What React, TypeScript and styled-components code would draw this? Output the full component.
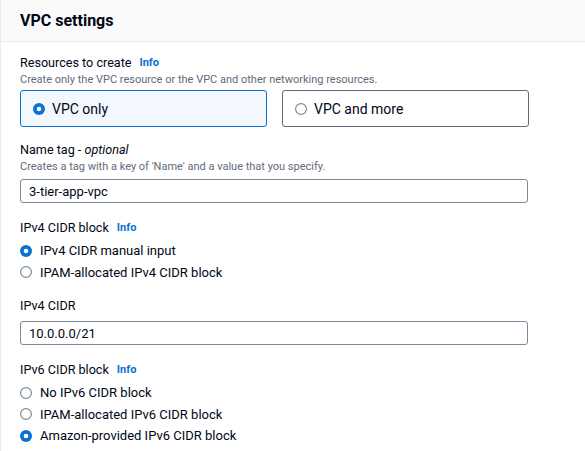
import { createGlobalStyle, styled } from "styled-components";

const GlobalStyle = createGlobalStyle`
  * {
    box-sizing: border-box;
  }

  body {
    margin: 0;
    background: #ffffff;
    font-family: Roboto, "Liberation Sans", Arial, sans-serif;
    color: #000716;
  }
`;

const Container = styled.section`
  width: 100%;
  min-height: 451px;
  border-left: 1px solid #e9ebed;
  background: #ffffff;
  overflow: hidden;
`;

const Header = styled.header`
  height: 42px;
  padding: 0 19px;
  display: flex;
  align-items: center;
  background: #fafafa;
  border-bottom: 1px solid #e9ebed;

  & h2 {
    margin: 0;
    font-size: 16px;
    font-weight: 700;
  }
`;

const Body = styled.div`
  padding: 12px 19px 0;
  display: flex;
  flex-direction: column;
`;

const Field = styled.div<{ $gap: number }>`
  display: flex;
  flex-direction: column;
  margin-bottom: ${(p) => p.$gap}px;
`;

const Label = styled.div`
  height: 18px;
  display: flex;
  align-items: center;
  gap: 8px;
  font-size: 12.6px;
  line-height: 18px;

  & em {
    font-style: italic;
  }
`;

const Info = styled.span`
  color: #0972d3;
  font-size: 11px;
  font-weight: 700;
`;

const Description = styled.div`
  height: 16px;
  font-size: 11px;
  line-height: 16px;
  color: #5f6b7a;
`;

const Tiles = styled.div`
  margin-top: 2px;
  display: flex;
  gap: 15px;
`;

const Tile = styled.div<{ $selected?: boolean }>`
  flex: 0 0 247px;
  height: 37px;
  padding: 0 12px;
  display: flex;
  align-items: center;
  gap: 7px;
  border: 1px solid ${(p) => (p.$selected ? "#0972d3" : "#5f6b7a")};
  border-radius: 3px;
  background: ${(p) => (p.$selected ? "#f2f8fd" : "#ffffff")};
  font-size: 14px;
`;

const Input = styled.div<{ $top: number }>`
  margin-top: ${(p) => p.$top}px;
  width: 508px;
  height: 24px;
  padding: 0 8px;
  display: flex;
  align-items: center;
  border: 1px solid #7d8998;
  border-radius: 3px;
  font-size: 13px;
`;

const RadioList = styled.div`
  margin-top: 3px;
  display: flex;
  flex-direction: column;
`;

const RadioRow = styled.div`
  height: 21.5px;
  display: flex;
  align-items: center;
  gap: 8px;
  font-size: 13px;
`;

function Radio({ checked }: { checked?: boolean }) {
  return (
    <svg width="12" height="12" viewBox="0 0 12 12">
      {checked ? (
        <>
          <circle cx="6" cy="6" r="6" fill="#0972d3" />
          <circle cx="6" cy="6" r="2.3" fill="#ffffff" />
        </>
      ) : (
        <circle cx="6" cy="6" r="5.4" fill="#ffffff" stroke="#7d8998" strokeWidth="1.2" />
      )}
    </svg>
  );
}

const ipv4Options = [
  { text: "IPv4 CIDR manual input", checked: true },
  { text: "IPAM-allocated IPv4 CIDR block" },
];

const ipv6Options = [
  { text: "No IPv6 CIDR block" },
  { text: "IPAM-allocated IPv6 CIDR block" },
  { text: "Amazon-provided IPv6 CIDR block", checked: true },
];

export default function App() {
  return (
    <>
      <GlobalStyle />
      <Container>
        <Header>
          <h2>VPC settings</h2>
        </Header>
        <Body>
          <Field $gap={14}>
            <Label>
              Resources to create<Info>Info</Info>
            </Label>
            <Description>
              Create only the VPC resource or the VPC and other networking resources.
            </Description>
            <Tiles>
              <Tile $selected>
                <Radio checked />
                VPC only
              </Tile>
              <Tile>
                <Radio />
                VPC and more
              </Tile>
            </Tiles>
          </Field>

          <Field $gap={16}>
            <Label>
              <span>
                Name tag - <em>optional</em>
              </span>
            </Label>
            <Description>Creates a tag with a key of 'Name' and a value that you specify.</Description>
            <Input $top={4}>3-tier-app-vpc</Input>
          </Field>

          <Field $gap={14}>
            <Label>
              IPv4 CIDR block<Info>Info</Info>
            </Label>
            <RadioList>
              {ipv4Options.map((o) => (
                <RadioRow key={o.text}>
                  <Radio checked={o.checked} />
                  {o.text}
                </RadioRow>
              ))}
            </RadioList>
          </Field>

          <Field $gap={16}>
            <Label>IPv4 CIDR</Label>
            <Input $top={6}>10.0.0.0/21</Input>
          </Field>

          <Field $gap={0}>
            <Label>
              IPv6 CIDR block<Info>Info</Info>
            </Label>
            <RadioList>
              {ipv6Options.map((o) => (
                <RadioRow key={o.text}>
                  <Radio checked={o.checked} />
                  {o.text}
                </RadioRow>
              ))}
            </RadioList>
          </Field>
        </Body>
      </Container>
    </>
  );
}
